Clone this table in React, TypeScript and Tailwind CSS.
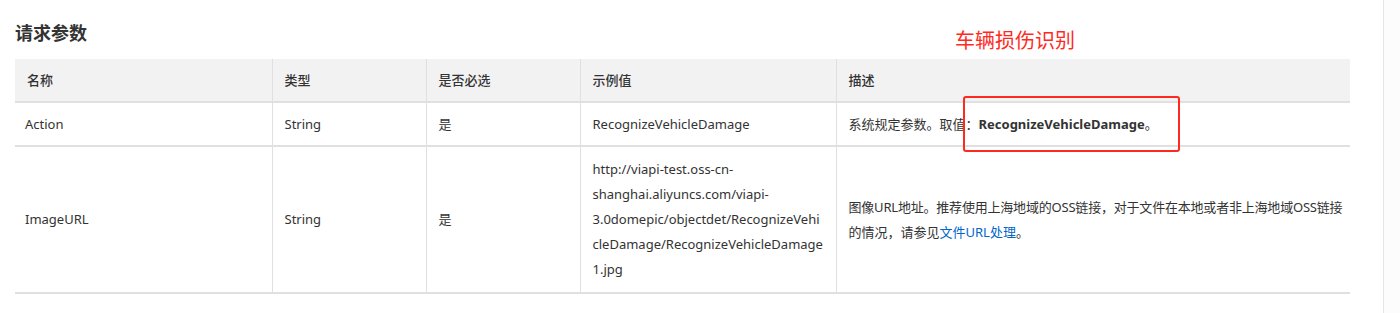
import React from "react";

const font = { fontFamily: '"Noto Sans", "Noto Sans CJK SC", sans-serif' };

export default function App() {
  return (
    <div className="flex h-[313px] w-[1400px] bg-white text-[#333]" style={font}>
      <div className="relative w-[1383px] shrink-0 pl-[15px] pt-[20px]">
        <h2 className="text-[18px] font-bold leading-[26px] text-[#333]">请求参数</h2>
        <div className="absolute left-[955px] top-[27px] text-[20px] leading-[28px] text-[#ff2a1f]">车辆损伤识别</div>
        <table className="mt-[13px] w-[1335px] table-fixed border-collapse text-[13px] leading-[25px]">
          <colgroup>
            <col className="w-[257px]" />
            <col className="w-[154px]" />
            <col className="w-[154px]" />
            <col className="w-[256px]" />
            <col className="w-[514px]" />
          </colgroup>
          <thead>
            <tr className="h-[43px] bg-[#f2f2f2] text-left">
              <th className="px-[12px] font-medium">名称</th>
              <th className="border-l border-[#e0e0e0] px-[12px] font-medium">类型</th>
              <th className="border-l border-[#e0e0e0] px-[12px] font-medium">是否必选</th>
              <th className="border-l border-[#e0e0e0] px-[12px] font-medium">示例值</th>
              <th className="border-l border-[#e0e0e0] px-[12px] font-medium">描述</th>
            </tr>
          </thead>
          <tbody>
            <tr className="h-[44px] border-t-2 border-[#e0e0e0]">
              <td className="px-[10px]">Action</td>
              <td className="border-l border-[#e0e0e0] px-[12px]">String</td>
              <td className="border-l border-[#e0e0e0] px-[12px]">是</td>
              <td className="border-l border-[#e0e0e0] px-[12px]">RecognizeVehicleDamage</td>
              <td className="border-l border-[#e0e0e0] px-[12px]">
                系统规定参数。取值：<span className="font-bold">RecognizeVehicleDamage</span>。
              </td>
            </tr>
            <tr className="h-[145px] border-y-2 border-[#e0e0e0]">
              <td className="px-[10px]">ImageURL</td>
              <td className="border-l border-[#e0e0e0] px-[12px]">String</td>
              <td className="border-l border-[#e0e0e0] px-[12px]">是</td>
              <td className="border-l border-[#e0e0e0] px-[12px] py-[10px]">
                <div>http://viapi-test.oss-cn-</div>
                <div>shanghai.aliyuncs.com/viapi-</div>
                <div>3.0domepic/objectdet/RecognizeVehi</div>
                <div>cleDamage/RecognizeVehicleDamage</div>
                <div>1.jpg</div>
              </td>
              <td className="border-l border-[#e0e0e0] px-[12px]">
                <div className="whitespace-nowrap tracking-[-0.2px]">图像URL地址。推荐使用上海地域的OSS链接，对于文件在本地或者非上海地域OSS链接</div>
                <div>
                  的情况，请参见<span className="text-[#0066cc]">文件URL处理</span>。
                </div>
              </td>
            </tr>
          </tbody>
        </table>
        <div className="pointer-events-none absolute left-[963px] top-[96px] h-[56px] w-[217px] rounded-[3px] border-2 border-[#ff2a1f]" />
      </div>
      <div className="w-px shrink-0 bg-[#e6e6e6]" />
      <div className="flex-1 bg-[#fcfcfc]" />
    </div>
  );
}
